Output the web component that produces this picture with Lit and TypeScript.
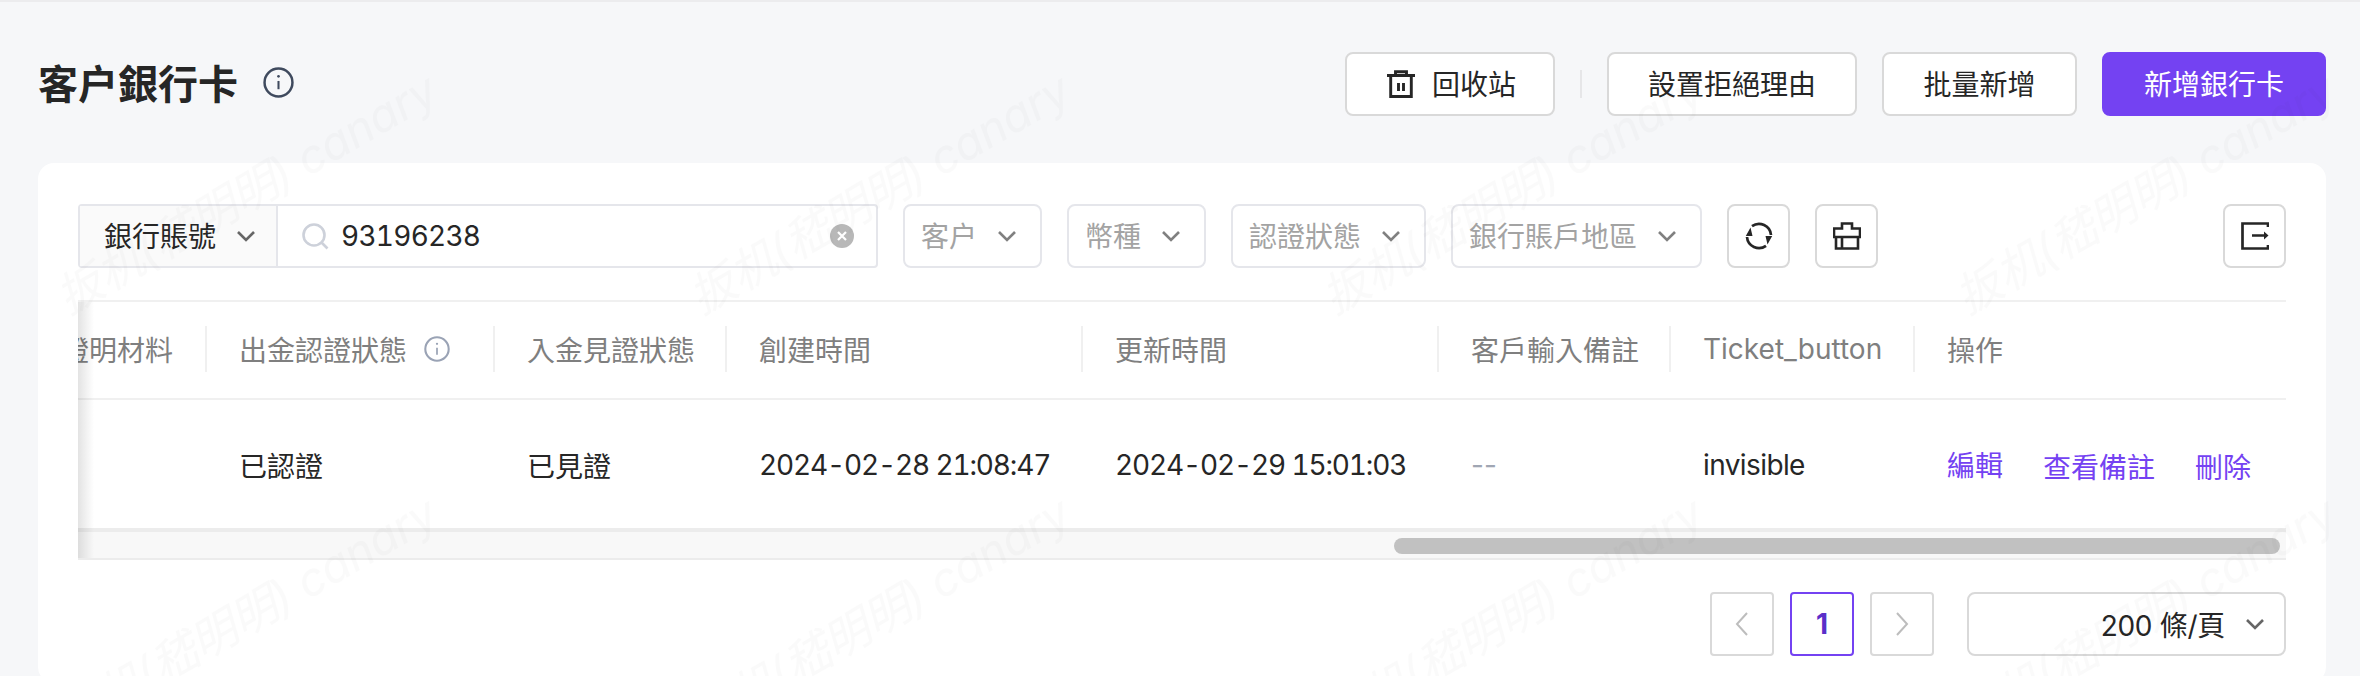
import { LitElement, html, css, svg } from "lit";
import { customElement } from "lit/decorators.js";

const chevron = (cls = "") => html`<svg class="chev ${cls}" width="20" height="12" viewBox="0 0 20 12"><path d="M2 2l8 8 8-8" fill="none" stroke="currentColor" stroke-width="2.6"/></svg>`;

const info = (size: number, color: string) => html`<svg width=${size} height=${size} viewBox="0 0 30 30" fill="none" stroke=${color}>
  <circle cx="15" cy="15" r="13.5" stroke-width="2.4"/>
  <path d="M15 13.5v8" stroke-width="2"/>
  <circle cx="15" cy="9" r="1.3" fill=${color} stroke="none"/>
</svg>`;

const trashIcon = svg`<path stroke-width="2.9" d="M8.5 5V1.8h11V5M0 5.5h28M3.7 5.5v21h20.6v-21M11.5 13v8M16.5 13v8"/>`;
const brushIcon = svg`<path stroke-width="2.6" d="M9 6.5v-5h10v5h8V15H1V6.5zM3 15v11.5h22V15M9 15v11.5"/>`;
const exportIcon = svg`<path stroke-width="2.7" d="M27 5V1.5H1.5v25H27V23M11 13.5h13"/><path d="M23 9.5l4.5 4-4.5 4z" fill="currentColor" stroke="none"/>`;
const refreshIcon = svg`<path stroke-width="2.7" d="M7 4.2A12 12 0 0 1 26 13M21 23.8A12 12 0 0 1 2 15"/><path d="M5.5 5.5L.8 14h6.7zM22.5 22.5L27.2 14h-6.7z" fill="currentColor" stroke="none"/>`;

const icon = (body: unknown) => html`<svg width="28" height="28" viewBox="0 0 28 28" fill="none" stroke="currentColor" stroke-width="2.5">${body}</svg>`;

const COLUMNS = ["證明材料", "出金認證狀態", "入金見證狀態", "創建時間", "更新時間", "客戶輸入備註", "Ticket_button", "操作"];

@customElement("app-root")
export class AppRoot extends LitElement {
  static styles = css`
    :host {
      display: block;
      position: relative;
      width: 2360px;
      height: 676px;
      overflow: hidden;
      box-sizing: border-box;
      background: #f6f7f9;
      border-top: 2px solid #ececee;
      font-family: Inter, "Noto Sans CJK TC", sans-serif;
      font-size: 28px;
      color: #262626;
    }
    * { box-sizing: border-box; }
    .t { margin-top: -2px; }
    .head {
      display: flex;
      align-items: center;
      height: 64px;
      margin: 50px 34px 47px 38px;
    }
    .title {
      display: flex;
      align-items: center;
      gap: 25px;
      margin-top: -4px;
      font-size: 40px;
      font-weight: 700;
      color: #262626;
    }
    .actions { display: flex; align-items: center; margin-left: auto; gap: 25px; }
    .btn {
      display: flex;
      align-items: center;
      justify-content: center;
      height: 64px;
      background: #fff;
      border: 2px solid #d9d9d9;
      border-radius: 8px;
      white-space: nowrap;
    }
    .recycle { width: 210px; gap: 17px; padding-left: 3px; }
    .sep { width: 2px; height: 28px; background: #e6e6e8; }
    .reason { width: 250px; }
    .batch { width: 195px; }
    .add { width: 224px; background: #7442f2; border-color: #7442f2; color: #fff; }
    .card {
      margin: 0 34px 0 38px;
      height: 520px;
      padding: 41px 40px 0;
      background: #fff;
      border-radius: 16px;
    }
    .toolbar { display: flex; align-items: center; gap: 25px; height: 64px; }
    .search {
      display: flex;
      width: 800px;
      height: 64px;
      border: 2px solid #e5e6eb;
      border-radius: 4px;
    }
    .prefix {
      display: flex;
      align-items: center;
      gap: 20px;
      width: 198px;
      padding-left: 24px;
      background: #fafafa;
      border-right: 2px solid #e5e6eb;
    }
    .prefix .chev { color: #666; }
    .input {
      display: flex;
      flex: 1;
      align-items: center;
      padding: 0 22px 0 24px;
      gap: 12px;
      font-variant-numeric: tabular-nums;
      letter-spacing: -0.75px;
    }
    .clear { margin-left: auto; }
    .select {
      display: flex;
      align-items: center;
      height: 64px;
      padding: 0 23px 0 16px;
      gap: 20px;
      border: 2px solid #e5e6eb;
      border-radius: 8px;
      color: #a3a3a3;
      white-space: nowrap;
    }
    .select .chev { color: #808080; }
    .square {
      width: 63px;
      height: 64px;
      display: flex;
      align-items: center;
      justify-content: center;
      border: 2px solid #d9d9d9;
      border-radius: 8px;
      color: #262626;
    }
    .export { margin-left: auto; }
    .table { position: relative; margin-top: 32px; }
    .shadow {
      position: absolute;
      left: 0;
      top: 2px;
      bottom: 2px;
      width: 16px;
      background: linear-gradient(90deg, rgba(0, 0, 0, 0.11), rgba(0, 0, 0, 0));
    }
    .row {
      display: grid;
      grid-template-columns: 127px 288px 232px 356px 356px 232px 244px 373px;
      align-items: center;
    }
    .row.header {
      height: 100px;
      padding-bottom: 2px;
      border-top: 2px solid #f0f0f0;
      border-bottom: 2px solid #f0f0f0;
      color: #7f7f7f;
    }
    .th {
      display: flex;
      align-items: center;
      gap: 17px;
      height: 46px;
      padding-left: 32px;
      border-left: 2px solid #f0f0f0;
      white-space: nowrap;
    }
    .th.clipped {
      justify-content: flex-end;
      overflow: hidden;
      padding: 0 32px 0 0;
      border-left: 0;
    }
    .row.body { height: 128px; padding-top: 1px; }
    .td { padding-left: 34px; white-space: nowrap; }
    .time { font-variant-numeric: tabular-nums; letter-spacing: -1.15px; }
    .word { letter-spacing: -0.6px; }
    .muted { color: #a0a6b3; }
    .ops { display: flex; gap: 40px; color: #7442f2; padding-top: 2px; }
    .ops span:first-child { margin-top: -2px; }
    .track {
      height: 32px;
      padding: 6px 6px 0 0;
      display: flex;
      justify-content: flex-end;
      background: #f8f8f8;
      border-top: 4px solid #ececec;
      border-bottom: 2px solid #ececec;
    }
    .thumb { width: 886px; height: 16px; background: #c1c1c1; border-radius: 8px; }
    .pager { display: flex; justify-content: flex-end; gap: 16px; margin-top: 32px; }
    .page {
      display: flex;
      align-items: center;
      justify-content: center;
      width: 64px;
      height: 64px;
      border: 2px solid #d9d9d9;
      border-radius: 4px;
      color: #bdbdbd;
    }
    .page.on { border-color: #7442f2; color: #5a2fc9; font-weight: 700; }
    .size {
      display: flex;
      align-items: center;
      justify-content: flex-end;
      gap: 20px;
      width: 319px;
      height: 64px;
      margin-left: 17px;
      padding-right: 19px;
      border: 2px solid #d9d9d9;
      border-radius: 8px;
      letter-spacing: -0.3px;
    }
    .size .chev { color: #666; }
    .watermark {
      position: absolute;
      inset: -2px 0 0 0;
      pointer-events: none;
    }
    .watermark text {
      font-family: Inter, "Noto Sans CJK SC", sans-serif;
      font-size: 46px;
      font-style: italic;
      fill: rgba(0, 0, 0, 0.018);
    }
  `;

  private header(label: string, i: number) {
    if (i === 0) return html`<div class="th clipped">${label}</div>`;
    return html`<div class="th">${label}${i === 1 ? info(26, "#9aa3b5") : ""}</div>`;
  }

  render() {
    return html`
      <div class="head">
        <div class="title">客户銀行卡 ${info(31, "#3f4a5e")}</div>
        <div class="actions">
          <div class="btn recycle">${icon(trashIcon)}<span class="t">回收站</span></div>
          <div class="sep"></div>
          <div class="btn reason"><span class="t">設置拒絕理由</span></div>
          <div class="btn batch"><span class="t">批量新增</span></div>
          <div class="btn add"><span class="t">新增銀行卡</span></div>
        </div>
      </div>
      <div class="card">
        <div class="toolbar">
          <div class="search">
            <div class="prefix"><span class="t">銀行賬號</span> ${chevron()}</div>
            <div class="input">
              <svg width="27" height="27" viewBox="0 0 27 27" fill="none" stroke="#cdd1da" stroke-width="2.6"><circle cx="12" cy="12" r="10.5"/><path d="M19.5 19.5l6 6"/></svg>
              93196238
              <svg class="clear" width="24" height="24" viewBox="0 0 24 24"><circle cx="12" cy="12" r="12" fill="#b8b8b8"/><path d="M8 8l8 8M16 8l-8 8" stroke="#fff" stroke-width="2.2"/></svg>
            </div>
          </div>
          <div class="select"><span class="t">客户</span> ${chevron()}</div>
          <div class="select"><span class="t">幣種</span> ${chevron()}</div>
          <div class="select"><span class="t">認證狀態</span> ${chevron()}</div>
          <div class="select"><span class="t">銀行賬戶地區</span> ${chevron()}</div>
          <div class="square">${icon(refreshIcon)}</div>
          <div class="square">${icon(brushIcon)}</div>
          <div class="square export">${icon(exportIcon)}</div>
        </div>
        <div class="table">
          <div class="row header">${COLUMNS.map((c, i) => this.header(c, i))}</div>
          <div class="row body">
            <div class="td"></div>
            <div class="td">已認證</div>
            <div class="td">已見證</div>
            <div class="td time">2024-02-28 21:08:47</div>
            <div class="td time">2024-02-29 15:01:03</div>
            <div class="td muted">--</div>
            <div class="td word">invisible</div>
            <div class="td ops"><span>編輯</span><span>查看備註</span><span>刪除</span></div>
          </div>
          <div class="track"><div class="thumb"></div></div>
          <div class="shadow"></div>
        </div>
        <div class="pager">
          <div class="page"><svg width="14" height="26" viewBox="0 0 14 26" fill="none" stroke="currentColor" stroke-width="2"><path d="M12 2L2 13l10 11"/></svg></div>
          <div class="page on">1</div>
          <div class="page"><svg width="14" height="26" viewBox="0 0 14 26" fill="none" stroke="currentColor" stroke-width="2"><path d="M2 2l10 11L2 24"/></svg></div>
          <div class="size">200 條/頁 ${chevron()}</div>
        </div>
      </div>
      <svg class="watermark" width="2360" height="676">
        <defs>
          <pattern id="wm" width="633" height="423" patternUnits="userSpaceOnUse">
            <text x="441" y="100" text-anchor="end" transform="rotate(-30 441 100)">扳机(嵇明明) canary</text>
          </pattern>
        </defs>
        <rect width="2360" height="676" fill="url(#wm)"></rect>
      </svg>
    `;
  }
}
